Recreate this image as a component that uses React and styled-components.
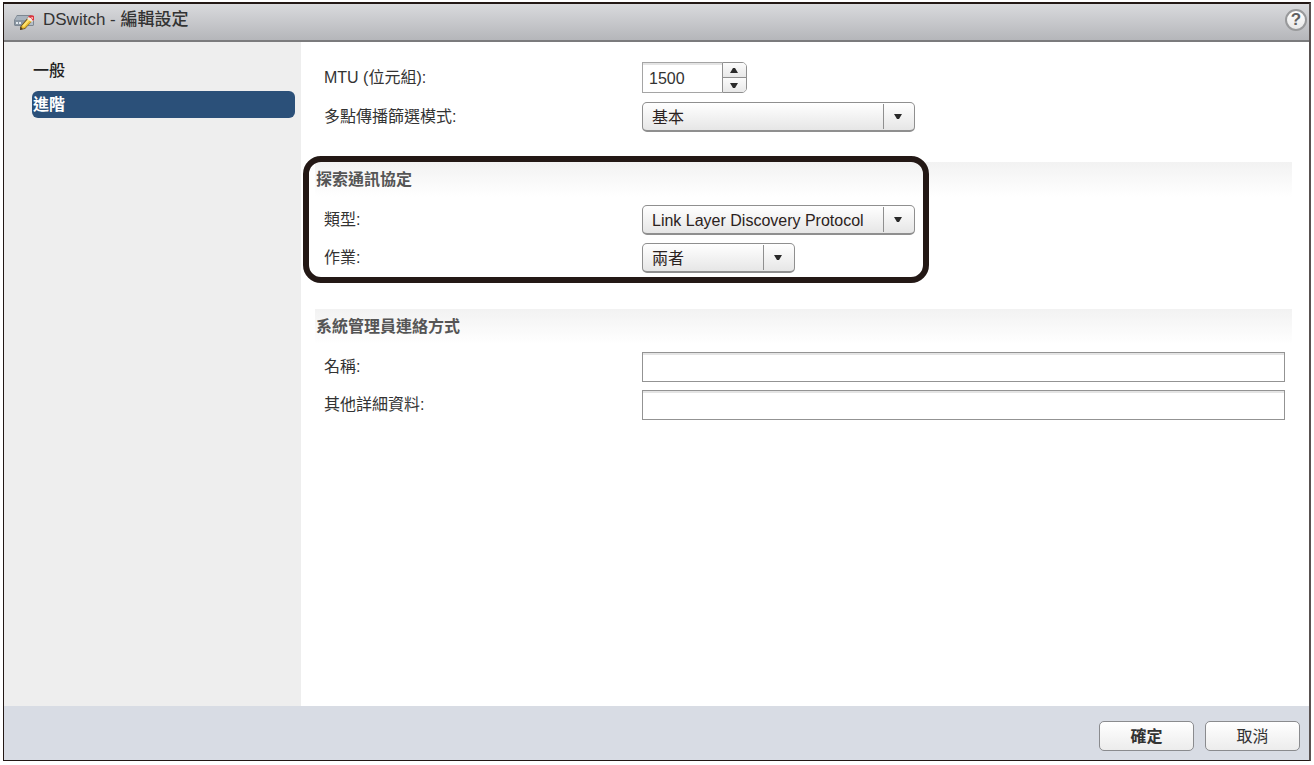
import { useState } from "react";
import styled, { createGlobalStyle } from "styled-components";

const GlobalStyle = createGlobalStyle`
  *, *::before, *::after {
    box-sizing: border-box;
  }

  body {
    margin: 0;
    background: #fff;
    color: #333;
    font-family: "Liberation Sans", "Noto Sans CJK TC", sans-serif;
    font-size: 16px;
    line-height: 20px;
  }

  button, input, select {
    font: inherit;
    color: inherit;
  }
`;

// ── Window ───────────────────────────────────────────────────
const Page = styled.div`
  display: flex;
  min-height: 100vh;
  padding: 2px 3px 4px;
`;

const Dialog = styled.form`
  flex: 1;
  display: flex;
  flex-direction: column;
  border: 1px solid #231815;
  border-top-width: 2px;
  border-right: 2px solid #595251;
`;

const TitleBar = styled.header`
  display: flex;
  align-items: center;
  gap: 8px;
  height: 38px;
  padding: 0 2px 0 10px;
  background: linear-gradient(#d9dadd, #b5b6ba);
  border-bottom: 2px solid #7b7b7d;
`;

const Title = styled.h1`
  flex: 1;
  margin: 0;
  padding-bottom: 4px;
  font-size: 17px;
  font-weight: 400;
  line-height: 24px;
`;

const TitleName = styled.span`
  font-weight: 500;
`;

const HelpButton = styled.button`
  width: 22px;
  height: 22px;
  margin-bottom: 5px;
  padding: 0;
  border: 2px solid #98999b;
  border-radius: 50%;
  background: linear-gradient(#fff, #e8e8e8);
  color: #606060;
  font-size: 17px;
  font-weight: 700;
  line-height: 18px;
`;

const Body = styled.div`
  flex: 1;
  display: flex;
`;

// ── Sidebar ──────────────────────────────────────────────────
const Sidebar = styled.nav`
  width: 297px;
  padding: 15px 6px 0 28px;
  background: #eee;
`;

const NavList = styled.ul`
  display: flex;
  flex-direction: column;
  gap: 7px;
  margin: 0;
  padding: 0;
  list-style: none;
`;

const NavLink = styled.a`
  display: block;
  height: 27px;
  padding-left: 1px;
  border-radius: 6px;
  background: ${({ $active }) => ($active ? "#2b5079" : "transparent")};
  color: ${({ $active }) => ($active ? "#fff" : "#222")};
  font-weight: ${({ $active }) => ($active ? 700 : 500)};
  line-height: 28px;
  text-decoration: none;
`;

// ── Form ─────────────────────────────────────────────────────
const Content = styled.main`
  flex: 1;
  display: flex;
  flex-direction: column;
  padding: 20px 17px 20px 14px;
`;

const Section = styled.section`
  position: relative;
  margin-bottom: ${({ $last }) => ($last ? "0" : "36px")};
`;

const General = styled.div`
  margin-bottom: 30px;
`;

const SectionTitle = styled.h2`
  height: 35px;
  margin: 0 0 8px;
  padding-left: 1px;
  background: linear-gradient(#f2f2f2, #fff);
  color: #555;
  font-size: 16px;
  font-weight: 700;
  line-height: 36px;
`;

const Rows = styled.div`
  display: flex;
  flex-direction: column;
  gap: ${({ $gap }) => $gap || 8}px;
`;

const Row = styled.div`
  display: grid;
  grid-template-columns: 318px 1fr;
  align-items: center;
  padding: 0 7px 0 9px;
`;

const Label = styled.label`
  color: #333;
`;

const TextInput = styled.input`
  width: 100%;
  height: 30px;
  padding: 0 9px;
  border: 1px solid #939393;
  border-radius: 0;
  background: #fff;
  box-shadow: inset 0 2px 0 #e4e4e4;
  outline: none;
`;

const Highlight = styled.div`
  position: absolute;
  top: -6px;
  left: -12px;
  width: 626px;
  height: 127px;
  border: 6px solid #231815;
  border-radius: 18px;
  pointer-events: none;
`;

// ── Select ───────────────────────────────────────────────────
const SelectBox = styled.div`
  position: relative;
  width: ${({ $width }) => $width}px;
`;

const NativeSelect = styled.select`
  display: block;
  width: 100%;
  height: 30px;
  padding: 2px 32px 0 9px;
  appearance: none;
  border: 1px solid #8f8f8f;
  border-bottom-width: 2px;
  border-radius: 5px;
  background: linear-gradient(#fff, #e6e6e6);
  color: #2b2220;
  outline: none;
`;

const SelectArrow = styled.span`
  position: absolute;
  top: 2px;
  right: 1px;
  bottom: 3px;
  display: flex;
  align-items: center;
  justify-content: center;
  width: 31px;
  padding-right: 3px;
  border-left: 1px solid #8f8f8f;
  pointer-events: none;
`;

// ── Stepper ──────────────────────────────────────────────────
const StepperBox = styled.div`
  display: flex;
  height: 31px;
`;

const StepperInput = styled.input`
  width: 80px;
  padding: 2px 6px 0;
  border: 1px solid #a5a5a5;
  border-right: 0;
  background: #fff;
  box-shadow: inset 0 2px 0 #e4e4e4;
  outline: none;
`;

const StepperButtons = styled.div`
  display: flex;
  flex-direction: column;
  width: 25px;
  border: 1px solid #8f8f8f;
  border-radius: 0 5px 5px 0;
  overflow: hidden;
`;

const StepButton = styled.button`
  flex: 1;
  display: flex;
  align-items: center;
  justify-content: center;
  padding: 0 2px 0 0;
  border: 0;
  background: linear-gradient(#fbfbfb, #e8e8e8);

  & + & {
    border-top: 1px solid #8f8f8f;
  }
`;

// ── Footer ───────────────────────────────────────────────────
const Footer = styled.footer`
  display: flex;
  justify-content: flex-end;
  gap: 11px;
  height: 54px;
  padding: 15px 9px 0;
  background: #d8dce4;
`;

const FooterButton = styled.button`
  width: 95px;
  height: 30px;
  padding: 2px 0 0;
  border: 1px solid #8a8b8e;
  border-radius: 5px;
  background: linear-gradient(#fff, #ececec);
  color: #333;
  font-weight: ${({ $primary }) => ($primary ? 700 : 400)};
`;

const Arrow = ({ up }) => (
  <svg width="8" height="5" viewBox="0 0 8 5" aria-hidden="true">
    <path d={up ? "M0 5 3 0h2l3 5z" : "M0 0h8L5 5H3z"} fill="#2a2a2a" />
  </svg>
);

const SwitchIcon = () => (
  <svg width="21" height="18" viewBox="0 0 21 18" aria-hidden="true">
    <path d="M3 2h14l3 5v5l-1 1H1l-1-1V7z" fill="#7d8792" />
    <path d="M3 3h13l3 4H1z" fill="#a9b3be" />
    <path d="M1 7h18v5H1z" fill="#8995a1" />
    <path d="M2 9h2v2H2zM5 9h2v2H5z" fill="#e3e9ee" />
    <path d="M15 8h4v4h-4z" fill="#b4bec8" />
    <path d="M6 17v-3l9-11 5 3-9 10z" fill="#6b5223" />
    <path d="m7 14 8-9 4 2-8 8-3 1z" fill="#e9bc32" />
    <path d="m8 13 7-8 2 1-7 8z" fill="#ffe36f" />
    <path d="m6 17 1-3 2 2z" fill="#54401f" />
    <path d="m13 6 2-3 5 4-2 2z" fill="#f4ecdf" />
    <path d="M15 3c1-1 4-1 5 0v4l-1 1-2-3-3-1z" fill="#dc333d" />
    <path d="M17 4h2v2h-1z" fill="#f7a5a5" />
  </svg>
);

const Select = ({ id, width, options }) => (
  <SelectBox $width={width}>
    <NativeSelect id={id} name={id} defaultValue={options[0]}>
      {options.map((option) => (
        <option key={option}>{option}</option>
      ))}
    </NativeSelect>
    <SelectArrow>
      <Arrow />
    </SelectArrow>
  </SelectBox>
);

const Stepper = ({ id, initial }) => {
  const [value, setValue] = useState(initial);

  return (
    <StepperBox>
      <StepperInput
        id={id}
        name={id}
        inputMode="numeric"
        value={value}
        onChange={(e) => setValue(e.target.value)}
      />
      <StepperButtons>
        <StepButton type="button" aria-label="增加" onClick={() => setValue(Number(value) + 1)}>
          <Arrow up />
        </StepButton>
        <StepButton type="button" aria-label="減少" onClick={() => setValue(Number(value) - 1)}>
          <Arrow />
        </StepButton>
      </StepperButtons>
    </StepperBox>
  );
};

const TABS = ["一般", "進階"];

const App = () => {
  const [tab, setTab] = useState("進階");

  const onSelectTab = (e, name) => {
    e.preventDefault();
    setTab(name);
  };

  return (
    <>
      <GlobalStyle />
      <Page>
        <Dialog onSubmit={(e) => e.preventDefault()}>
          <TitleBar>
            <SwitchIcon />
            <Title>
              DSwitch - <TitleName>編輯設定</TitleName>
            </Title>
            <HelpButton type="button">?</HelpButton>
          </TitleBar>

          <Body>
            <Sidebar>
              <NavList>
                {TABS.map((name) => (
                  <li key={name}>
                    <NavLink href="#" $active={name === tab} onClick={(e) => onSelectTab(e, name)}>
                      {name}
                    </NavLink>
                  </li>
                ))}
              </NavList>
            </Sidebar>

            <Content>
              <General>
                <Rows $gap={9}>
                  <Row>
                    <Label htmlFor="mtu">MTU (位元組):</Label>
                    <Stepper id="mtu" initial="1500" />
                  </Row>
                  <Row>
                    <Label htmlFor="multicast">多點傳播篩選模式:</Label>
                    <Select id="multicast" width={273} options={["基本"]} />
                  </Row>
                </Rows>
              </General>

              <Section>
                <SectionTitle>探索通訊協定</SectionTitle>
                <Rows>
                  <Row>
                    <Label htmlFor="type">類型:</Label>
                    <Select id="type" width={273} options={["Link Layer Discovery Protocol"]} />
                  </Row>
                  <Row>
                    <Label htmlFor="operation">作業:</Label>
                    <Select id="operation" width={153} options={["兩者"]} />
                  </Row>
                </Rows>
                <Highlight />
              </Section>

              <Section $last>
                <SectionTitle>系統管理員連絡方式</SectionTitle>
                <Rows>
                  <Row>
                    <Label htmlFor="name">名稱:</Label>
                    <TextInput id="name" name="name" />
                  </Row>
                  <Row>
                    <Label htmlFor="details">其他詳細資料:</Label>
                    <TextInput id="details" name="details" />
                  </Row>
                </Rows>
              </Section>
            </Content>
          </Body>

          <Footer>
            <FooterButton type="submit" $primary>
              確定
            </FooterButton>
            <FooterButton type="button">取消</FooterButton>
          </Footer>
        </Dialog>
      </Page>
    </>
  );
};

export default App;
